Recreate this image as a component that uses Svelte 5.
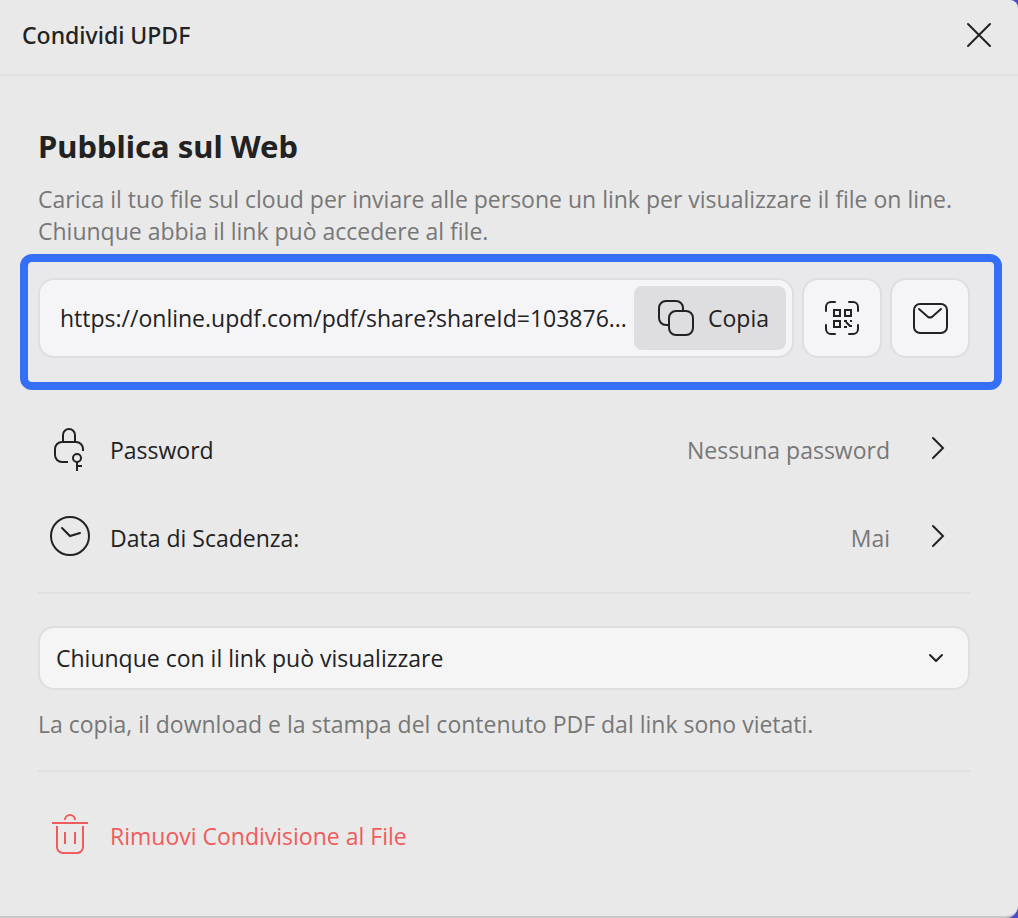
<script lang="ts">
	const link = 'https://online.updf.com/pdf/share?shareId=103876...';
	const permissions = ['Chiunque con il link può visualizzare'];

	let permission = $state(permissions[0]);
</script>

<div class="dialog">
	<header class="titlebar">
		<h1 class="title">Condividi UPDF</h1>
		<button class="close" aria-label="Chiudi">
			<svg width="28" height="28" viewBox="0 0 28 28" fill="none" stroke="currentColor" stroke-width="2" stroke-linecap="round"><path d="M3 3l22 22M25 3L3 25" /></svg>
		</button>
	</header>

	<main class="content">
		<h2 class="heading">Pubblica sul Web</h2>
		<p class="intro">Carica il tuo file sul cloud per inviare alle persone un link per visualizzare il file on line. Chiunque abbia il link può accedere al file.</p>

		<section class="highlight">
			<div class="link-box">
				<input class="link" type="text" readonly value={link} aria-label="Link di condivisione" />
				<button class="copy">
					<svg width="36" height="36" viewBox="0 0 36 36" fill="none" stroke="currentColor" stroke-width="2">
						<path d="M11 25H8a7 7 0 0 1-7-7V8a7 7 0 0 1 7-7h10a7 7 0 0 1 7 7v3" />
						<rect x="11" y="11" width="24" height="24" rx="7" />
					</svg>
					Copia
				</button>
			</div>
			<button class="square" aria-label="Codice QR">
				<svg width="36" height="36" viewBox="0 0 36 36" fill="none" stroke="currentColor" stroke-width="2">
					<path stroke-linecap="round" d="M2 11V7a5 5 0 0 1 5-5h4M25 2h4a5 5 0 0 1 5 5v4M34 25v4a5 5 0 0 1-5 5h-4M11 34H7a5 5 0 0 1-5-5v-4" />
					<path d="M10 10h6v6h-6zM21 10h6v6h-6zM10 21h6v6h-6z" />
					<path d="M20 21h3M22 22l4 4M25 26h3M26 21h2M20 27h3" />
				</svg>
			</button>
			<button class="square" aria-label="E-mail">
				<svg width="36" height="36" viewBox="0 0 36 36" fill="none" stroke="currentColor" stroke-width="2">
					<rect x="2" y="4" width="33" height="29" rx="6" />
					<path stroke-linecap="round" d="M7 9l9 8q2 1 4 0l9-8" />
				</svg>
			</button>
		</section>

		<div class="options">
			<button class="option">
				<svg class="icon" width="40" height="44" viewBox="0 0 40 44" fill="none" stroke="currentColor" stroke-width="2">
					<path d="M13 16V9a6 6 0 0 1 12 0v7" />
					<path d="M18 36h-6a7 7 0 0 1-7-7v-6a7 7 0 0 1 7-7h14a7 7 0 0 1 7 7v2" />
					<circle cx="27" cy="32" r="4" />
					<path d="M27 36v9M27 40h5" />
				</svg>
				<span class="name">Password</span>
				<span class="value">Nessuna password</span>
				<svg class="chevron" width="16" height="24" viewBox="0 0 16 24" fill="none" stroke="currentColor" stroke-width="2" stroke-linecap="round"><path d="M3 2l10 10L3 22" /></svg>
			</button>
			<button class="option">
				<svg class="icon" width="40" height="44" viewBox="0 0 40 44" fill="none" stroke="currentColor" stroke-width="2">
					<circle cx="20" cy="22" r="19" />
					<path stroke-linecap="round" d="M12 14l8 8 10-3" />
				</svg>
				<span class="name">Data di Scadenza:</span>
				<span class="value">Mai</span>
				<svg class="chevron" width="16" height="24" viewBox="0 0 16 24" fill="none" stroke="currentColor" stroke-width="2" stroke-linecap="round"><path d="M3 2l10 10L3 22" /></svg>
			</button>
		</div>

		<div class="permission">
			<div class="select-wrap">
				<select bind:value={permission} aria-label="Permessi del link">
					{#each permissions as item (item)}
						<option value={item}>{item}</option>
					{/each}
				</select>
				<svg class="arrow" width="16" height="16" viewBox="0 0 16 16" fill="none" stroke="currentColor" stroke-width="2" stroke-linecap="round" stroke-linejoin="round"><path d="M2 5l6 6 6-6" /></svg>
			</div>
			<p class="note">La copia, il download e la stampa del contenuto PDF dal link sono vietati.</p>
		</div>

		<button class="option remove">
			<svg class="icon" width="40" height="44" viewBox="0 0 40 44" fill="none" stroke="currentColor" stroke-width="2">
				<path d="M2 11h36M15 8a5 5 0 0 1 10 0M7 14v21a6 6 0 0 0 6 6h14a6 6 0 0 0 6-6V14M15 20v12M25 20v12" />
			</svg>
			<span class="name">Rimuovi Condivisione al File</span>
		</button>
	</main>
</div>

<style>
	:global(body) {
		background: #4a4bcb;
	}
	.dialog {
		box-sizing: border-box;
		min-height: 100vh;
		background: #e9e9e9;
		border-bottom: 2px solid #cbc8c9;
		border-radius: 0 8px 12px 0;
		color: #222;
		font-family: 'Open Sans', 'Noto Sans', sans-serif;
		font-size: 23px;
		line-height: 32px;
	}
	button,
	input,
	select {
		font: inherit;
		color: inherit;
		margin: 0;
		padding: 0;
		border: none;
		background: none;
	}
	svg {
		display: block;
		flex: none;
	}

	.titlebar {
		display: flex;
		align-items: center;
		justify-content: space-between;
		padding: 18px 25px 22px 22px;
		border-bottom: 2px solid #e0e0e0;
	}
	.title,
	.heading {
		margin: 0;
		font-family: 'Noto Sans', sans-serif;
	}
	.title {
		font-weight: 500;
		font-size: 23px;
		line-height: 34px;
	}

	.content {
		padding: 48px 48px 32px 38px;
	}
	.heading {
		font-weight: 700;
		font-size: 31px;
		line-height: 44px;
	}
	.intro,
	.note {
		margin: 0;
		color: #777;
	}
	.intro {
		margin-top: 15px;
	}

	/* frame reaches past the text column on both sides */
	.highlight {
		display: flex;
		gap: 8px;
		margin: 7px -32px 0 -18px;
		padding: 16px 24px 24px 10px;
		border: 8px solid #346ff5;
		border-radius: 12px;
		background: #e9e8ea;
	}
	.link-box,
	.square {
		box-sizing: border-box;
		height: 80px;
		border: 2px solid #dedee0;
		border-radius: 16px;
		background: #f5f5f8;
	}
	.link-box {
		flex: 1;
		min-width: 0;
		display: flex;
		align-items: center;
		gap: 4px;
		padding: 0 6px 0 20px;
	}
	.link {
		flex: 1;
		min-width: 0;
		text-overflow: ellipsis;
	}
	.copy {
		display: flex;
		align-items: center;
		gap: 14px;
		width: 152px;
		height: 64px;
		padding-left: 24px;
		border-radius: 8px;
		background: #dedee0;
	}
	.square {
		flex: none;
		display: flex;
		align-items: center;
		justify-content: center;
		width: 80px;
	}

	.options {
		padding: 16px 0 10px;
		border-bottom: 2px solid #e0e0e0;
	}
	.option {
		display: flex;
		align-items: center;
		width: 100%;
		height: 88px;
		padding: 0 24px 0 12px;
		text-align: left;
	}
	.icon {
		margin-right: 20px;
	}
	.option svg {
		margin-bottom: 4px;
		overflow: visible;
	}
	.name {
		flex: 1;
	}
	.value {
		margin-right: 40px;
		color: #777;
	}

	.permission {
		padding: 32px 0 30px;
		border-bottom: 2px solid #e0e0e0;
	}
	.select-wrap {
		position: relative;
	}
	select {
		appearance: none;
		box-sizing: border-box;
		width: 100%;
		height: 64px;
		padding: 0 56px 0 16px;
		border: 2px solid #dedede;
		border-radius: 16px;
		background: #f5f5f5;
	}
	.arrow {
		position: absolute;
		top: 24px;
		right: 26px;
		pointer-events: none;
	}
	.note {
		margin-top: 18px;
	}

	.remove {
		margin-top: 20px;
		color: #f05b5b;
	}
</style>
